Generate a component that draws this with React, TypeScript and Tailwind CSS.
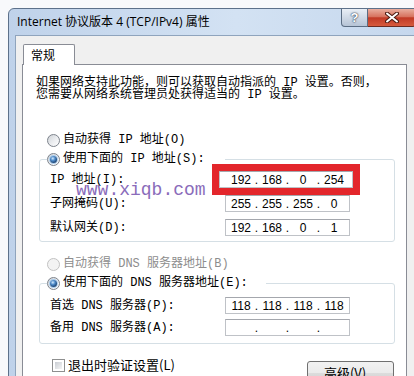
import { Fragment } from "react";

const simsun = "font-['Liberation_Mono','Noto_Sans_CJK_SC',monospace] text-[12px] leading-[16px] text-black";

function Radio({ checked, disabled }: { checked?: boolean; disabled?: boolean }) {
  return (
    <span
      className={`flex h-[13px] w-[13px] shrink-0 items-center justify-center rounded-full border ${
        disabled
          ? "border-[#c2c2c2] bg-[#f3f3f3]"
          : "border-[#7d838c] bg-linear-to-br from-[#cfd2d6] via-[#eaecef] to-white"
      }`}
    >
      {checked && (
        <span className="h-[7px] w-[7px] rounded-full bg-[radial-gradient(circle_at_40%_35%,#d4ebff_0%,#4f8bc9_35%,#173f6f_75%,#0b2746_100%)] ring-1 ring-[#a8cbec]" />
      )}
    </span>
  );
}

function IpBox({ parts, wide }: { parts: string[]; wide?: boolean }) {
  return (
    <div
      className={`flex h-[17px] items-center border border-[#bfc2c7] border-t-[#a4a7ad] bg-white font-['Liberation_Sans',sans-serif] text-[12px] leading-none text-black ${
        wide
          ? "-ml-[6px] w-[134px] pl-[8px] outline-[7px] outline-solid outline-[#e3262b]"
          : "w-[125px] pl-[2px]"
      }`}
    >
      {parts.map((p, i) => (
        <Fragment key={i}>
          {i > 0 && <span className="w-[5px] text-center">.</span>}
          <span className="w-[26px] text-center">{p}</span>
        </Fragment>
      ))}
    </div>
  );
}

function Row({ label, children }: { label: string; children: React.ReactNode }) {
  return (
    <div className="flex h-[17px] items-center">
      <span className="w-[185px] pl-[10px] whitespace-nowrap">{label}</span>
      {children}
    </div>
  );
}

export default function App() {
  return (
    <div className="relative h-[376px] w-[414px] overflow-hidden bg-[#f8f9fb] pl-[8px] pt-[8px]">
      <div className="w-[415px] rounded-t-[6px] border border-[#5d718a] bg-[linear-gradient(to_right,#bfd2ea,#d3e2f3_55%,#c5d7ed)] px-[6px]">
        {/* title bar */}
        <div className="flex h-[26px] items-start">
          <span className="ml-[2px] self-center whitespace-nowrap font-['Open_Sans','Noto_Sans_CJK_SC',sans-serif] text-[12px] text-black">
            Internet 协议版本 4 (TCP/IPv4) 属性
          </span>
          <div className="flex-1" />
          <div className="flex h-[18px] w-[27px] items-center justify-center rounded-bl-[4px] border border-t-0 border-[#5b6d83] bg-linear-to-b from-[#e9eef5] to-[#b6c4d6] font-['Liberation_Sans',sans-serif] text-[13px] font-bold text-white [text-shadow:0_0_2px_#27364a,0_0_1px_#27364a]">
            ?
          </div>
          <div className="flex h-[18px] w-[48px] items-center justify-center rounded-br-[4px] border border-l-0 border-t-0 border-[#6b2a20] bg-[linear-gradient(to_bottom,#e9ae9f_0%,#d7735f_45%,#c13a26_52%,#d65a3d_100%)]">
            <svg width="14" height="11" viewBox="0 0 14 11">
              <path d="M2 1.5 L12 9.5 M12 1.5 L2 9.5" stroke="#4a1a12" strokeWidth="4" strokeLinecap="round" />
              <path d="M2 1.5 L12 9.5 M12 1.5 L2 9.5" stroke="#ffffff" strokeWidth="2" strokeLinecap="round" />
            </svg>
          </div>
        </div>

        {/* client area */}
        <div className="border border-[#8fa4bd] bg-[#f0f0f0] pb-[40px] pl-[6px] pt-[8px]">
          <div className="relative z-10 -mb-px ml-[1px] flex h-[21px] w-[52px] items-center rounded-t-[2px] border border-b-0 border-[#898c95] bg-white pl-[7px] font-['Noto_Sans_CJK_SC',sans-serif] text-[12px] text-black">
            常规
          </div>

          <div className={`w-[385px] border border-[#898c95] bg-white pb-[20px] ${simsun}`}>
            <p className="whitespace-nowrap pl-[13px] pt-[12px] leading-[12px]">
              如果网络支持此功能，则可以获取自动指派的 IP 设置。否则，
              <br />
              您需要从网络系统管理员处获得适当的 IP 设置。
            </p>

            <div className="ml-[24px] mt-[31px] flex h-[16px] items-center gap-[3px]">
              <Radio />
              <span className="whitespace-nowrap">自动获得 IP 地址(O)</span>
            </div>

            <fieldset className="ml-[16px] mt-[3px] w-[356px] rounded-[3px] border border-[#d5dfe5] pb-[5px]">
              <legend className="ml-[7px] pr-[20px]">
                <span className="flex h-[16px] items-center gap-[3px] whitespace-nowrap">
                  <Radio checked />
                  使用下面的 IP 地址(S):
                </span>
              </legend>
              <div className="mt-[4px] flex flex-col gap-[7px]">
                <Row label="IP 地址(I):">
                  <IpBox wide parts={["192", "168", "0", "254"]} />
                </Row>
                <Row label="子网掩码(U):">
                  <IpBox parts={["255", "255", "255", "0"]} />
                </Row>
                <Row label="默认网关(D):">
                  <IpBox parts={["192", "168", "0", "1"]} />
                </Row>
              </div>
            </fieldset>

            <div className="ml-[24px] mt-[14px] flex h-[16px] items-center gap-[3px] text-[#8d8d8d]">
              <Radio disabled />
              <span className="whitespace-nowrap">自动获得 DNS 服务器地址(B)</span>
            </div>

            <fieldset className="ml-[16px] mt-[3px] w-[356px] rounded-[3px] border border-[#d5dfe5] pb-[7px]">
              <legend className="ml-[7px] pr-[18px]">
                <span className="flex h-[16px] items-center gap-[3px] whitespace-nowrap">
                  <Radio checked />
                  使用下面的 DNS 服务器地址(E):
                </span>
              </legend>
              <div className="mt-[6px] flex flex-col gap-[5px]">
                <Row label="首选 DNS 服务器(P):">
                  <IpBox parts={["118", "118", "118", "118"]} />
                </Row>
                <Row label="备用 DNS 服务器(A):">
                  <IpBox parts={["", "", "", ""]} />
                </Row>
              </div>
            </fieldset>

            <div className="mt-[13px] flex items-start justify-between pr-[12px]">
              <div className="ml-[29px] flex h-[16px] items-center gap-[3px] font-['Noto_Sans_CJK_SC',sans-serif] text-[13px]">
                <span className="h-[13px] w-[13px] border border-[#8e8f8f] bg-white p-[2px]">
                  <span className="block h-full w-full bg-linear-to-br from-[#c9cdd3] to-[#f5f5f5]" />
                </span>
                <span className="whitespace-nowrap">退出时验证设置(L)</span>
              </div>
              <button className="mt-[4px] h-[23px] w-[87px] rounded-[3px] border border-[#707070] bg-[linear-gradient(to_bottom,#f2f2f2_0%,#ebebeb_50%,#dddddd_50%,#cfcfcf_100%)] font-['Noto_Sans_CJK_SC',sans-serif] text-[13px] leading-[20px] text-black">
                高级(V)...
              </button>
            </div>
          </div>
        </div>
      </div>

      <span className="pointer-events-none absolute left-[76px] top-[180px] whitespace-nowrap font-['Liberation_Mono',monospace] text-[18px] leading-[20px] text-[#8a6cba]">
        www.xiqb.com
      </span>
    </div>
  );
}
